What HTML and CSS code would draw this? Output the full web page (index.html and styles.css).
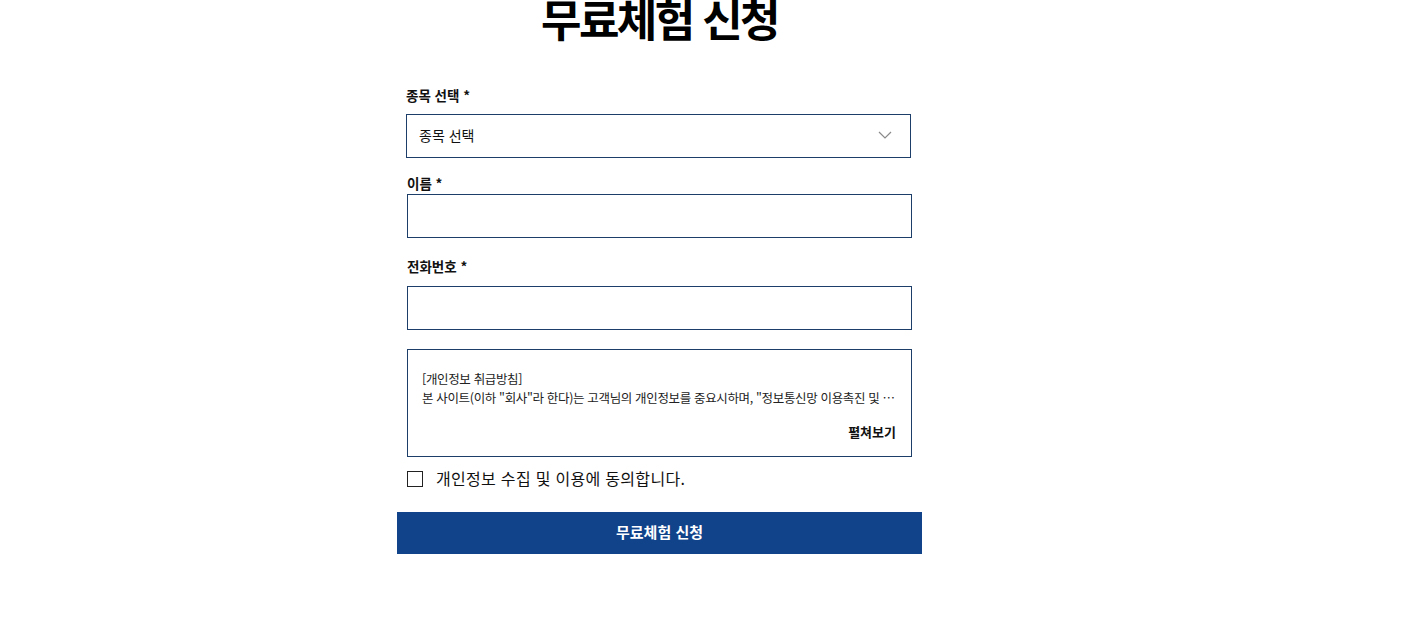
FILE: index.html
```html
<!DOCTYPE html>
<html lang="ko">
<head>
    <meta charset="UTF-8">
    <meta name="viewport" content="width=device-width, initial-scale=1.0">
    <title>무료체험 신청</title>
    <link rel="stylesheet" href="styles.css">
</head>
<body>
    <div class="apply-container">
        <h1 class="apply-title">무료체험 신청</h1>
        <form id="apply-form" class="apply-form">
            <label class="field-label label-sport" for="sport">종목 선택 *</label>
            <div class="select-wrap">
                <select id="sport" class="field-select" required>
                    <option value="">종목 선택</option>
                </select>
                <svg class="select-arrow" width="14" height="8" viewBox="0 0 14 8">
                    <path d="M1 1 L7 7 L13 1" fill="none" stroke="#8a8a8a" stroke-width="1.2"/>
                </svg>
            </div>

            <label class="field-label label-name" for="name">이름 *</label>
            <input type="text" id="name" class="field-input" required>

            <label class="field-label label-phone" for="phone">전화번호 *</label>
            <input type="tel" id="phone" class="field-input" required>

            <div class="privacy-box">
                <p class="privacy-title">[개인정보 취급방침]</p>
                <p class="privacy-text">본 사이트(이하 "회사"라 한다)는 고객님의 개인정보를 중요시하며, "정보통신망 이용촉진 및 정보보호 등에 관한 법률"을 준수하고 있습니다.</p>
                <div class="privacy-more">펼쳐보기</div>
            </div>

            <label class="agree-row">
                <input type="checkbox" id="agree" class="agree-check">
                <span class="agree-text">개인정보 수집 및 이용에 동의합니다.</span>
            </label>

            <button type="button" class="submit-btn">무료체험 신청</button>
        </form>
    </div>
</body>
</html>
```

FILE: styles.css
```css
body {
    margin: 0;
    font-family: "Noto Sans CJK KR", "Noto Sans", sans-serif;
    background-color: #ffffff;
    color: #111111;
}

.apply-container {
    width: 525px;
    margin-left: 397px;
}

.apply-title {
    margin: -4px 0 0;
    font-size: 44px;
    line-height: 44px;
    font-weight: 700;
    letter-spacing: -2.6px;
    text-align: center;
    color: #000000;
}

.apply-form {
    padding: 0 10px;
}

.field-label {
    display: block;
    font-size: 13.5px;
    font-weight: 700;
    line-height: 20px;
    color: #111111;
}

.label-sport {
    margin: 45px 0 9px -1px;
}

.label-name {
    margin: 15px 0 1px;
}

.label-phone {
    margin: 18px 0 10px;
}

.select-wrap {
    position: relative;
    margin-left: -1px;
    width: 505px;
}

.field-select {
    -webkit-appearance: none;
    appearance: none;
    display: block;
    width: 100%;
    height: 44px;
    padding: 0 40px 3px 12px;
    border: 1px solid #1d3e69;
    border-radius: 0;
    background: #ffffff;
    font-family: inherit;
    font-size: 14px;
    color: #111111;
    box-sizing: border-box;
}

.select-arrow {
    position: absolute;
    right: 19px;
    top: 17px;
    pointer-events: none;
}

.field-input {
    display: block;
    width: 505px;
    height: 44px;
    padding: 0 12px;
    border: 1px solid #1d3e69;
    border-radius: 0;
    font-family: inherit;
    font-size: 14px;
    box-sizing: border-box;
}

.privacy-box {
    margin-top: 19px;
    height: 108px;
    padding: 19px 15px 0 14px;
    border: 1px solid #1d3e69;
    box-sizing: border-box;
}

.privacy-title,
.privacy-text {
    margin: 0;
    font-size: 12.5px;
    line-height: 19px;
    letter-spacing: -0.35px;
    color: #222222;
}

.privacy-text {
    white-space: nowrap;
    overflow: hidden;
    text-overflow: ellipsis;
}

.privacy-more {
    margin-top: 16px;
    text-align: right;
    font-size: 13px;
    font-weight: 700;
    line-height: 18px;
    letter-spacing: 0;
    color: #111111;
}

.agree-row {
    display: flex;
    align-items: center;
    gap: 13px;
    margin-top: 14px;
    font-size: 16px;
    line-height: 16px;
    letter-spacing: 0.3px;
    color: #111111;
    cursor: pointer;
}

.agree-text {
    margin-top: -3px;
}

.agree-check {
    -webkit-appearance: none;
    appearance: none;
    flex-shrink: 0;
    width: 16px;
    height: 16px;
    margin: 0;
    border: 1px solid #222222;
    border-radius: 0;
    background: #ffffff;
}

.agree-check:checked {
    background: #11438b;
}

.submit-btn {
    display: block;
    width: 525px;
    height: 42px;
    margin: 25px 0 0 -10px;
    padding: 0 0 3px;
    border: none;
    background-color: #11438b;
    color: #ffffff;
    font-family: inherit;
    font-size: 15px;
    font-weight: 700;
    cursor: pointer;
}

.submit-btn:hover {
    background-color: #0c3370;
}
```
